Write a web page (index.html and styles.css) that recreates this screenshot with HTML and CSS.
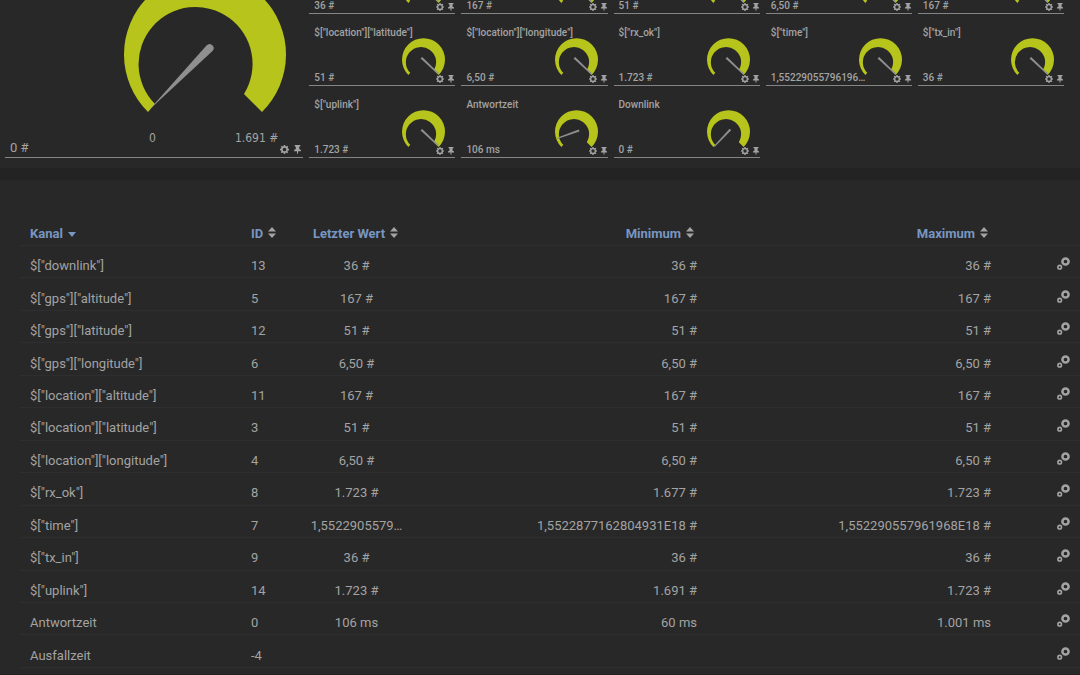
FILE: index.html
```
<!DOCTYPE html>
<html lang="de">
<head>
<meta charset="utf-8">
<title>Kanäle</title>
<link rel="stylesheet" href="styles.css">
</head>
<body>
<svg class="defs" aria-hidden="true">
  <symbol id="ring" viewBox="-81 -81 162 139"><path d="M-57 58A81 81 0 1 1 57 58L39 40A57 57 0 1 0-50 50Z"/></symbol>
  <symbol id="gear" viewBox="0 0 16 16"><path fill-rule="evenodd" d="M6.8 0h2.4l.5 2.2 1.2.5 2-1.200 1.700 1.700-1.200 2 .5 1.200 2.100.5v2.300l-2.200.5-.5 1.200 1.200 2-1.700 1.700-2-1.200-1.200.5-.4 2.100H6.800l-.5-2.200-1.200-.5-2 1.200-1.700-1.700 1.200-2-.5-1.200L0 9.200V6.800l2.200-.5.5-1.200-1.200-2 1.700-1.700 2 1.200 1.200-.5zM8 4.700a3.300 3.300 0 1 0 0 6.600 3.300 3.300 0 0 0 0-6.600z"/></symbol>
  <symbol id="pin" viewBox="0 0 16 16"><path d="M3 0h10v2l-2 1v4l3 2v2H9.200L8.500 16h-1L6.800 11H2V9l3-2V3L3 2z"/></symbol>
  <symbol id="links" viewBox="0 0 13 13"><circle cx="8.500" cy="4.500" r="3.100" fill="none" stroke="currentColor" stroke-width="2.500"/><circle cx="2.700" cy="10.200" r="1.800" fill="none" stroke="currentColor" stroke-width="1.600"/></symbol>
  <symbol id="sort" viewBox="0 0 8 11"><path d="M4 0 8 4.500H0zM0 6.500h8L4 11z"/></symbol>
  <symbol id="down" viewBox="0 0 8 5"><path d="M0 0h8L4 5z"/></symbol>
</svg>
<main>
  <section class="board" id="board"></section>
  <section class="panel">
    <table>
      <colgroup><col class="c-name"><col class="c-id"><col class="c-last"><col><col><col class="c-act"></colgroup>
      <thead>
        <tr>
          <th><a href="#kanal">Kanal <svg class="down"><use href="#down"/></svg></a></th>
          <th><a href="#id">ID <svg class="sort"><use href="#sort"/></svg></a></th>
          <th class="mid"><a href="#wert">Letzter Wert <svg class="sort"><use href="#sort"/></svg></a></th>
          <th class="num"><a href="#min">Minimum <svg class="sort"><use href="#sort"/></svg></a></th>
          <th class="num"><a href="#max">Maximum <svg class="sort"><use href="#sort"/></svg></a></th>
          <th></th>
        </tr>
      </thead>
      <tbody id="rows"></tbody>
    </table>
  </section>
</main>
<script src="app.js"></script>
</body>
</html>
```
FILE: styles.css
```
* { box-sizing: border-box; }
body {
  margin: 0;
  background: #232323;
  color: #a3a3a3;
  font-family: Roboto, "Liberation Sans", sans-serif;
  font-size: 13px;
}
svg { fill: currentColor; display: block; }
.defs { position: absolute; width: 0; height: 0; }

.board {
  display: grid;
  grid-template-columns: repeat(7, minmax(0, 1fr));
  grid-auto-rows: 72px;
  column-gap: 6px;
  margin-top: -58px;
  padding: 0 16px 10px 5px;
  background: #282828;
}
.card {
  position: relative;
  display: flex;
  flex-direction: column;
  justify-content: space-between;
  padding: 12px 5px 1px;
  border-bottom: 1px solid #858585;
  font-size: 10px;
  font-weight: 500;
  line-height: 13px;
}
.card h2 { margin: 0; font: inherit; }
.card .value { margin-top: auto; white-space: nowrap; }
.ring { fill: #b7c41c; width: 100%; height: 100%; }
.gauge {
  position: absolute;
  right: 10px;
  bottom: 10px;
  width: 43px;
  height: 37px;
}
.needle {
  position: absolute;
  inset: 0;
  width: 100%;
  height: 100%;
  overflow: visible;
  fill: #8f8f8f;
}
.tools {
  position: absolute;
  right: 0;
  bottom: 2px;
  display: flex;
  gap: 3px;
}
.tools button {
  padding: 0;
  border: 0;
  background: none;
  color: inherit;
}
.tools svg { width: 8px; height: 8px; }

.big {
  grid-column: span 2;
  grid-row: span 3;
  font-size: 13px;
  font-weight: 400;
}
.big .gauge { right: 17px; bottom: 45px; width: 162px; height: 139px; }
.scale {
  display: flex;
  justify-content: space-between;
  margin: auto 20px 0 139px;
  font-family: "DejaVu Sans Condensed", "DejaVu Sans", sans-serif;
  font-size: 12px;
}
.big .value { margin: -4px 0 2px; }
.big .tools { right: 1px; gap: 4px; bottom: 3px; }
.big .tools svg { width: 9px; height: 9px; }

.panel {
  margin-top: 12px;
  padding: 31px 0 6px 20px;
  background: #282828;
}
table {
  width: 100%;
  height: 457px;
  table-layout: fixed;
  border-collapse: collapse;
}
.c-name { width: 221px; }
.c-id { width: 59px; }
.c-last { width: 113px; }
.c-act { width: 79px; }
th, td {
  padding: 12px 10px 4px;
  border-bottom: 1px solid #2e2e2e;
  line-height: 15px;
  text-align: left;
  white-space: nowrap;
}
th { padding-top: 15px; font-weight: 700; }
th a {
  display: inline-flex;
  align-items: center;
  gap: 5px;
  color: #7896c2;
  text-decoration: none;
}
.mid { text-align: center; }
th.mid { padding-right: 12px; }
.num { text-align: right; }
th.num { padding-right: 13px; }
.sort { width: 8px; height: 11px; margin-bottom: 3px; color: #a3a3a3; }
.down { width: 8px; height: 5px; margin-top: 2px; }
.act a { display: block; width: 13px; margin-left: auto; color: inherit; }
.act svg { width: 13px; height: 13px; }
td.act { padding: 9px 10px 5px; }
```
FILE: app.js
```
const cards = [
  ['', '36 #', -90], ['', '167 #', -90], ['', '51 #', -90], ['', '6,50 #', -90], ['', '167 #', -90],
  ['$["location"]["latitude"]', '51 #', -90], ['$["location"]["longitude"]', '6,50 #', -90],
  ['$["rx_ok"]', '1.723 #', -90], ['$["time"]', '1,55229055796196…', -90], ['$["tx_in"]', '36 #', -90],
  ['$["uplink"]', '1.723 #', -90], ['Antwortzeit', '106 ms', 27], ['Downlink', '0 #', 0]
];
const rows = [
  ['$["downlink"]', '13', '36 #', '36 #', '36 #'],
  ['$["gps"]["altitude"]', '5', '167 #', '167 #', '167 #'],
  ['$["gps"]["latitude"]', '12', '51 #', '51 #', '51 #'],
  ['$["gps"]["longitude"]', '6', '6,50 #', '6,50 #', '6,50 #'],
  ['$["location"]["altitude"]', '11', '167 #', '167 #', '167 #'],
  ['$["location"]["latitude"]', '3', '51 #', '51 #', '51 #'],
  ['$["location"]["longitude"]', '4', '6,50 #', '6,50 #', '6,50 #'],
  ['$["rx_ok"]', '8', '1.723 #', '1.677 #', '1.723 #'],
  ['$["time"]', '7', '1,5522905579…', '1,5522877162804931E18 #', '1,552290557961968E18 #'],
  ['$["tx_in"]', '9', '36 #', '36 #', '36 #'],
  ['$["uplink"]', '14', '1.723 #', '1.691 #', '1.723 #'],
  ['Antwortzeit', '0', '106 ms', '60 ms', '1.001 ms'],
  ['Ausfallzeit', '-4', '', '', '']
];
const tools = `<div class="tools">
  <button type="button" aria-label="Einstellungen"><svg><use href="#gear"/></svg></button>
  <button type="button" aria-label="Anheften"><svg><use href="#pin"/></svg></button></div>`;
const gauge = (shape, angle) => `<div class="gauge"><svg class="ring"><use href="#ring"/></svg>
  <svg class="needle" viewBox="-81 -81 162 139"><path transform="rotate(${angle})" d="${shape}"/></svg></div>`;
const thick = 'M-56 56L1.500-8.500A3.500 3.500 0 0 1 7.500-3Z';
const thin = 'M-55 54L4-11L10-5L-52 58Z';

document.getElementById('board').innerHTML =
  `<article class="card big">${gauge(thick, 0)}
    <div class="scale"><span>0</span><span>1.691 #</span></div>
    <div class="value">0 #</div>${tools}</article>` +
  cards.map(([name, value, angle]) =>
    `<article class="card">${name ? `<h2>${name}</h2>` : ''}${gauge(thin, angle)}<div class="value">${value}</div>${tools}</article>`
  ).join('');

document.getElementById('rows').innerHTML = rows.map(([name, id, last, min, max]) =>
  `<tr><td>${name}</td><td>${id}</td><td class="mid">${last}</td><td class="num">${min}</td><td class="num">${max}</td>
   <td class="act"><a href="#kanal-${id}" aria-label="Kanal ${id} bearbeiten"><svg><use href="#links"/></svg></a></td></tr>`
).join('');
```
